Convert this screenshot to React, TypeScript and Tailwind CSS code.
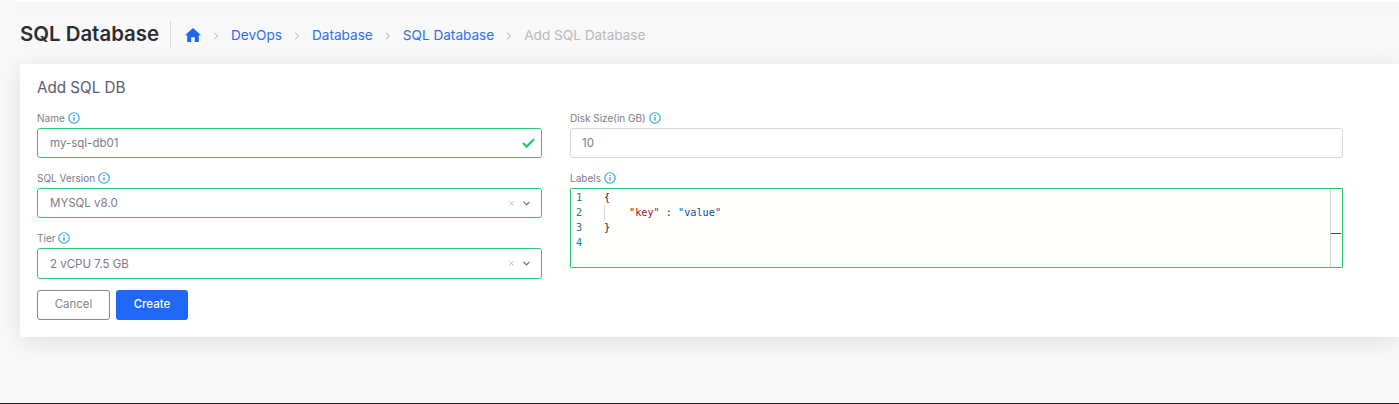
import React from "react";
import { Check, ChevronDown, ChevronRight, X } from "lucide-react";

const InfoIcon = () => (
  <svg width="12" height="12" viewBox="0 0 12 12" fill="none" className="shrink-0">
    <circle cx="6" cy="6" r="5.2" stroke="#22a7f0" strokeWidth="1.1" />
    <path d="M6 5.2v3.4" stroke="#1f6fe0" strokeWidth="1.1" />
    <path d="M6 3.1v1" stroke="#1f6fe0" strokeWidth="1.1" />
  </svg>
);

const HomeIcon = () => (
  <svg width="16" height="14" viewBox="0 0 16 14" className="mb-[2px]">
    <path d="M8 0 0 7.2h2.2V14h4V9.2h3.6V14h4V7.2H16z" fill="#1f66f2" />
  </svg>
);

const FieldLabel = ({ text }: { text: string }) => (
  <div className="h-[20px] flex items-center gap-[3px] text-[10px] leading-none text-[#7d7a88]">
    <span>{text}</span>
    <InfoIcon />
  </div>
);

const SelectField = ({ value, tall }: { value: string; tall?: boolean }) => (
  <div
    className={`flex items-center border border-[#28c76f] rounded-[3px] bg-white pl-[12px] pr-[9px] text-[11.5px] text-[#7d7a88] ${
      tall ? "h-[31px]" : "h-[30px]"
    }`}
  >
    <span className="flex-1 pt-[2px]">{value}</span>
    <X size={7} strokeWidth={2} className="text-[#8a8a8a] mr-[6px]" />
    <ChevronDown size={11} strokeWidth={2.4} className="text-[#666]" />
  </div>
);

const crumbs = ["DevOps", "Database", "SQL Database"];

export default function App() {
  return (
    <div
      className="h-[404px] overflow-hidden bg-[#f8f8f8] flex flex-col"
      style={{ fontFamily: "Inter, 'Open Sans', sans-serif" }}
    >
      <div className="h-[2px] ml-[16px] bg-white shadow-[0_3px_16px_rgba(0,0,0,0.13)] shrink-0" />

      <div className="h-[62px] pl-[20px] pt-[19px] flex items-start shrink-0">
        <div className="h-[27px] flex items-center text-[20.4px] font-semibold text-[#2c2c34] w-[151px] border-r border-[#d8d8dc]">
          SQL Database
        </div>
        <div className="h-[27px] flex items-center pl-[14px] pt-[2px] text-[13.6px] text-[#2f6fed]">
          <HomeIcon />
          {crumbs.map((c) => (
            <React.Fragment key={c}>
              <ChevronRight size={12} strokeWidth={1.5} className="text-[#8b8b94] mx-[9px]" />
              <span>{c}</span>
            </React.Fragment>
          ))}
          <ChevronRight size={12} strokeWidth={1.5} className="text-[#8b8b94] mx-[9px]" />
          <span className="text-[#b9b9c3]">Add SQL Database</span>
        </div>
      </div>

      <div className="h-[273px] ml-[20px] bg-white rounded-l-[3px] shadow-[0_4px_24px_rgba(0,0,0,0.1)] pl-[17px] pt-[15px] shrink-0">
        <div className="h-[18px] flex items-center text-[15.2px] text-[#5e5873]">Add SQL DB</div>
        <div className="mt-[11px] flex gap-[28px]">
          <div className="w-[505px]">
            <FieldLabel text="Name" />
            <div className="h-[30px] flex items-center border border-[#28c76f] rounded-[3px] pl-[12px] pr-[5px] text-[11.5px] text-[#7d7a88]">
              <span className="flex-1 pt-[1px]">my-sql-db01</span>
              <Check size={15} strokeWidth={3.5} className="text-[#28c76f]" />
            </div>
            <div className="mt-[10px]">
              <FieldLabel text="SQL Version" />
              <SelectField value="MYSQL v8.0" />
            </div>
            <div className="mt-[10px]">
              <FieldLabel text="Tier" />
              <SelectField value="2 vCPU 7.5 GB" tall />
            </div>
            <div className="mt-[11px] flex gap-[6px] text-[11.5px]">
              <button className="w-[73px] h-[30px] border border-[#82868b] rounded-[3px] text-[#82868b]">Cancel</button>
              <button className="w-[72px] h-[30px] rounded-[3px] bg-[#2067fa] text-white font-medium">Create</button>
            </div>
          </div>

          <div className="w-[773px]">
            <FieldLabel text="Disk Size(in GB)" />
            <div className="h-[30px] flex items-center border border-[#d8d6de] rounded-[3px] pl-[11px] text-[11.5px] text-[#7d7a88]">
              <span className="pt-[1px]">10</span>
            </div>
            <div className="mt-[10px]">
              <FieldLabel text="Labels" />
              <div
                className="h-[80px] border border-[#28c76f] rounded-[1px] bg-[#fffffe] flex text-[10.2px] leading-[15px]"
                style={{ fontFamily: "'DejaVu Sans Mono', monospace" }}
              >
                <div className="w-[33px] pl-[5px] pt-[1px] text-[#237893]">
                  <div>1</div>
                  <div>2</div>
                  <div>3</div>
                  <div>4</div>
                </div>
                <div className="flex-1 pt-[1px] text-[#1f1f1f]">
                  <div>{"{"}</div>
                  <div className="border-l border-[#d3d3d3] pl-[24px]">
                    <span className="text-[#a31515]">"key"</span>
                    <span> : </span>
                    <span className="text-[#0451a5]">"value"</span>
                  </div>
                  <div>{"}"}</div>
                </div>
                <div className="w-[12px] border-l border-[#d0d0d0] flex items-start pt-[44px]">
                  <div className="w-[10px] h-px bg-[#444]" />
                </div>
              </div>
            </div>
          </div>
        </div>
      </div>

      <div className="flex-1" />
      <div className="h-px bg-[#1d1d1f] shrink-0" />
    </div>
  );
}
